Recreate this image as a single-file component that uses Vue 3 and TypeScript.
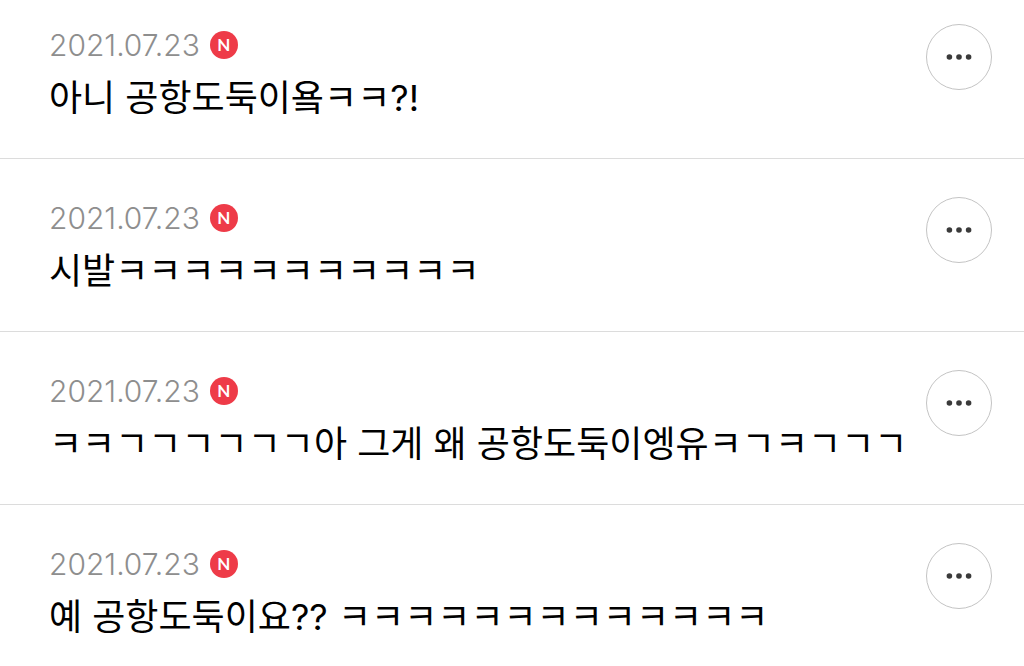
<script setup lang="ts">
interface Comment {
  id: number
  date: string
  text: string
}

const comments: Comment[] = [
  { id: 1, date: '2021.07.23', text: '아니 공항도둑이욬ㅋㅋ?!' },
  { id: 2, date: '2021.07.23', text: '시발ㅋㅋㅋㅋㅋㅋㅋㅋㅋㅋㅋ' },
  { id: 3, date: '2021.07.23', text: 'ㅋㅋㄱㄱㄱㄱㄱㄱ아 그게 왜 공항도둑이엥유ㅋㄱㅋㄱㄱㄱ' },
  { id: 4, date: '2021.07.23', text: '예 공항도둑이요?? ㅋㅋㅋㅋㅋㅋㅋㅋㅋㅋㅋㅋㅋ' },
]
</script>

<template>
  <ul class="comments">
    <li v-for="item in comments" :key="item.id" class="comment">
      <div class="body">
        <div class="meta">
          <time class="date">{{ item.date }}</time>
          <span class="badge">N</span>
        </div>
        <p class="text">{{ item.text }}</p>
      </div>
      <button class="more" type="button" aria-label="더보기">
        <svg viewBox="0 0 26 6" width="26" height="6" aria-hidden="true">
          <circle cx="3.4" cy="3" r="2.8" />
          <circle cx="13" cy="3" r="2.8" />
          <circle cx="22.6" cy="3" r="2.8" />
        </svg>
      </button>
    </li>
  </ul>
</template>

<style>
body {
  background: #fff;
  overflow: hidden;
}
</style>

<style scoped>
.comments {
  margin: 0;
  padding: 0;
  list-style: none;
  font-family: Inter, "Noto Sans CJK KR", sans-serif;
}
.comment {
  display: flex;
  align-items: flex-start;
  justify-content: space-between;
  box-sizing: border-box;
  padding: 38px 32px 32px 49px;
  border-bottom: 1px solid #dcdcdc;
}
.comment:first-child {
  padding-top: 24px;
}
.body {
  min-width: 0;
}
.meta {
  display: flex;
  align-items: center;
  gap: 10px;
  height: 42px;
}
.date {
  color: #8e8e8e;
  font-size: 30px;
  font-weight: 300;
}
.badge {
  display: flex;
  align-items: center;
  justify-content: center;
  width: 28px;
  height: 28px;
  border-radius: 50%;
  background: #ee3b48;
  color: #fff;
  font-family: Lato, Inter, sans-serif;
  font-size: 17px;
  font-weight: 700;
  line-height: 26px;
}
.text {
  margin: 4px 0 0;
  color: #000;
  font-family: Inter, "Noto Sans CJK KR", sans-serif;
  font-size: 36px;
  line-height: 56px;
  white-space: nowrap;
}
.more {
  display: flex;
  flex: none;
  align-items: center;
  justify-content: center;
  width: 66px;
  height: 66px;
  padding: 0;
  border: 1px solid #c4c4c4;
  border-radius: 50%;
  background: #fff;
  color: #3a3a3a;
}
.more svg {
  fill: currentColor;
}
</style>
